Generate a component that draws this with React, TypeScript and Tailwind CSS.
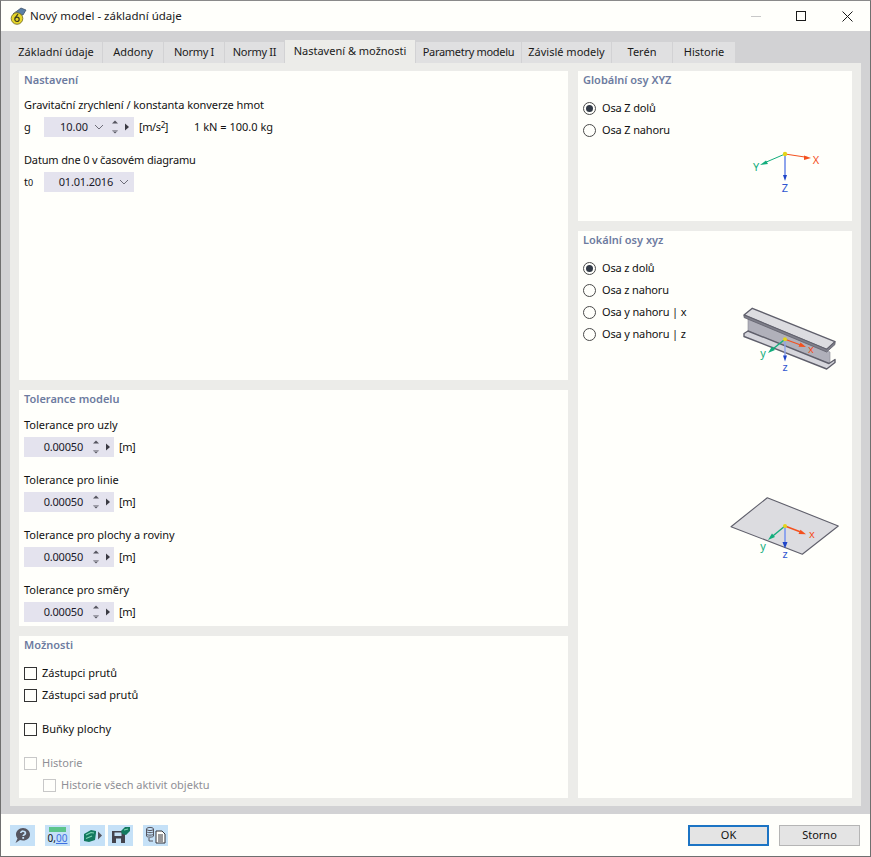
import React from "react";

const FONT = { fontFamily: '"Noto Sans", "Open Sans", sans-serif' };

function Spin() {
  return (
    <svg width="8" height="16" viewBox="0 0 8 16" className="block">
      <path d="M4 1.5 L7 4.5 H1 Z" fill="#55555f" />
      <path d="M4 14.5 L7 11.5 H1 Z" fill="#55555f" />
      <path d="M2 12.5 H6" stroke="#9a9aa5" />
    </svg>
  );
}
function Play() {
  return (
    <svg width="6" height="8" viewBox="0 0 6 8" className="block">
      <path d="M1 0.5 L5 4 L1 7.5 Z" fill="#3a3a42" />
    </svg>
  );
}
function Chevron() {
  return (
    <svg width="10" height="6" viewBox="0 0 10 6" className="block">
      <path d="M1 1 L5 5 L9 1" fill="none" stroke="#6d6d78" strokeWidth="1" />
    </svg>
  );
}

function Tab({ w, label, active, tight }: { w: string; label: string; active?: boolean; tight?: boolean }) {
  return (
    <div
      className={
        (active
          ? "h-[23px] flex items-center justify-center bg-[#ecece9] text-[#1a1a1a] "
          : "h-[21px] flex items-center justify-center bg-[#e0e0e1] text-[#1a1a1a] ") +
        (tight ? "tracking-[-0.3px] " : "") +
        w
      }
    >
      {label}
    </div>
  );
}

function Panel({ title, className, children }: { title: string; className: string; children?: React.ReactNode }) {
  return (
    <section className={"bg-[#fffffb] px-[5px] " + className}>
      <h2 className="h-[18px] leading-[18px] font-semibold text-[#6d7ba0] text-[11px]">{title}</h2>
      {children}
    </section>
  );
}

function Tolerance({ label, first }: { label: string; first?: boolean }) {
  return (
    <div className={first ? "mt-[8px]" : "mt-[14px]"}>
      <div className="h-[18px] leading-[18px]">{label}</div>
      <div className="mt-[3px] flex items-center h-[20px]">
        <div className="w-[90px] h-[20px] bg-[#e4e3ee] flex items-center">
          <span className="w-[59px] text-right text-[#1a1a2a] tracking-[-0.2px]">0.00050</span>
          <span className="ml-[9px]"><Spin /></span>
          <span className="ml-[5px]"><Play /></span>
        </div>
        <span className="ml-[5px] tracking-[-0.4px]">[m]</span>
      </div>
    </div>
  );
}

function Radio({ label, checked }: { label: string; checked?: boolean }) {
  return (
    <div className="h-[22px] flex items-center">
      <span className="w-[13px] h-[13px] rounded-full border border-[#4a4a4a] bg-[#fffffb] flex items-center justify-center">
        {checked && <span className="w-[7px] h-[7px] rounded-full bg-[#333b47]" />}
      </span>
      <span className="ml-[6px] tracking-[-0.15px]">{label}</span>
    </div>
  );
}

function Check({ label, disabled, className }: { label: string; disabled?: boolean; className?: string }) {
  return (
    <div className={"h-[22px] flex items-center " + (className ?? "")}>
      <span className={"w-[13px] h-[13px] border " + (disabled ? "border-[#c8c8c8]" : "border-[#333333]")} />
      <span className={"ml-[5px] " + (disabled ? "text-[#8f8f96]" : "")}>{label}</span>
    </div>
  );
}

function GlobalAxes() {
  return (
    <svg width="127" height="60" viewBox="720 140 127 60" className="block">
      <path d="M785 154 L808 157.5" stroke="#f4511e" strokeWidth="1" />
      <path d="M811 158 L804 155.5 L804 160 Z" fill="#f4511e" />
      <path d="M785 154 L764 163" stroke="#12ad7c" strokeWidth="1" />
      <path d="M760 165 L766 160.5 L768 164 Z" fill="#12ad7c" />
      <path d="M785 154 V175" stroke="#8ea4ec" strokeWidth="2" />
      <path d="M785 181 L783 175 H787 Z" fill="#1f45c8" />
      <circle cx="785" cy="154" r="2.2" fill="#e4d41a" />
      <text x="816" y="164" textAnchor="middle" fontSize="11" fill="#f4511e">X</text>
      <text x="756" y="171" textAnchor="middle" fontSize="11" fill="#12ad7c">Y</text>
      <text x="785" y="192" textAnchor="middle" fontSize="11" fill="#2f55d0">Z</text>
    </svg>
  );
}

function BeamIcon() {
  return (
    <svg width="127" height="90" viewBox="720 290 127 90" className="block">
      <path d="M748 318 L830 352 V364 L748 331 Z" fill="#b0b0ba" stroke="#8a8a95" strokeWidth="0.6" />
      <path d="M744 333.5 L748 331 L829 363.5 L835 359.5 V362.5 L826.7 369 L744 336.5 Z" fill="#d6d6dc" stroke="#5f5f6b" strokeWidth="1.4" strokeLinejoin="round" />
      <path d="M744 315 L752.3 308.3 L835 341.7 L826.7 349.3 Z" fill="#dcdce0" stroke="#5f5f6b" strokeWidth="1.4" strokeLinejoin="round" />
      <path d="M744 315 L826.7 349.3 L835 341.7 V344.5 L826.7 352 L744 317.5 Z" fill="#7f7f8a" stroke="#5f5f6b" strokeWidth="0.8" strokeLinejoin="round" />
      <path d="M785 339.3 L802 345.5" stroke="#f4511e" strokeWidth="1.2" />
      <path d="M806 347 L798.5 346.8 L800.5 342.5 Z" fill="#f4511e" />
      <path d="M785 339.3 L771 350.5" stroke="#12ad7c" strokeWidth="1.4" />
      <path d="M768 353 L772 346.5 L775 350 Z" fill="#12ad7c" />
      <path d="M785 339.3 V356" stroke="#8ea4ec" strokeWidth="1.4" />
      <path d="M785 361.5 L783 355.5 H787 Z" fill="#1f45c8" />
      <circle cx="785" cy="339.3" r="2" fill="#e4d41a" />
      <text x="811" y="353" textAnchor="middle" fontSize="11" fill="#f4511e">x</text>
      <text x="763" y="357" textAnchor="middle" fontSize="11" fill="#12ad7c">y</text>
      <text x="785" y="371" textAnchor="middle" fontSize="11" fill="#2f55d0">z</text>
    </svg>
  );
}

function PlateIcon() {
  return (
    <svg width="127" height="80" viewBox="720 485 127 80" className="block">
      <path d="M767.3 497.7 L838.3 526 L802.3 554.3 L731 526.7 Z" fill="#dcdce0" stroke="#5f5f6b" strokeWidth="1.1" strokeLinejoin="round" />
      <path d="M785 526 L802 532.5" stroke="#f4511e" strokeWidth="1.4" />
      <path d="M806 534.3 L798.5 534 L800.5 529.8 Z" fill="#f4511e" />
      <path d="M785 526 L771 537.5" stroke="#12ad7c" strokeWidth="1.4" />
      <path d="M768 540 L772 533.5 L775 537 Z" fill="#12ad7c" />
      <path d="M785 526 V543" stroke="#8ea4ec" strokeWidth="2" />
      <path d="M785 548.5 L782.5 542 H787.5 Z" fill="#1f45c8" />
      <circle cx="785" cy="526" r="2" fill="#e4d41a" />
      <text x="812" y="538" textAnchor="middle" fontSize="11" fill="#f4511e">x</text>
      <text x="763" y="550" textAnchor="middle" fontSize="11" fill="#12ad7c">y</text>
      <text x="785" y="558" textAnchor="middle" fontSize="11" fill="#2f55d0">z</text>
    </svg>
  );
}

function AppIcon() {
  return (
    <svg width="18" height="18" viewBox="0 0 18 18" className="block">
      <path d="M4 7 L12 1 L17 3 L14 8 Z" fill="#5b7fa6" stroke="#33465e" strokeWidth="0.7" />
      <path d="M3 9 L7 4 L8 8 Z" fill="#9a9a82" />
      <circle cx="8" cy="11.5" r="5.8" fill="#e7d62b" stroke="#6b6320" strokeWidth="0.8" />
      <circle cx="8" cy="12.3" r="2.2" fill="none" stroke="#3b3b20" strokeWidth="1.2" />
      <path d="M6 11 L9 7.2" stroke="#3b3b20" strokeWidth="1.2" />
    </svg>
  );
}

function FootBtn({ children, className }: { children: React.ReactNode; className: string }) {
  return <div className={"w-[25px] h-[21px] bg-[#c5e1f7] flex items-center justify-center " + className}>{children}</div>;
}

export default function App() {
  return (
    <div
      style={FONT}
      className="w-[871px] h-[857px] flex flex-col bg-[#d2d2d4] border border-[#6f6f6f] border-t-[#8a8a8a] text-[11px] text-[#111111] overflow-hidden"
    >
      <header className="h-[30px] bg-[#fffffb] flex items-center pl-[8px] shrink-0">
        <AppIcon />
        <span className="ml-[3px] text-[11.5px] text-[#1a1a1a]">Nový model - základní údaje</span>
        <div className="ml-auto flex items-center">
          <span className="w-[10px] h-px bg-[#c8c8c8] mr-[35px]" />
          <span className="w-[10px] h-[10px] border border-[#1a1a1a] mr-[36px]" />
          <svg width="11" height="11" viewBox="0 0 11 11" className="block mr-[17px]">
            <path d="M0.5 0.5 L10.5 10.5 M10.5 0.5 L0.5 10.5" stroke="#1a1a1a" strokeWidth="1" />
          </svg>
        </div>
      </header>

      <div className="flex-1 flex flex-col pl-[9px] pr-[9px] pt-[9px] pb-[8px] min-h-0">
        <nav className="flex items-end h-[23px] gap-px shrink-0">
          <Tab w="w-[92px]" label="Základní údaje" />
          <Tab w="w-[60px]" label="Addony" />
          <Tab w="w-[60px]" label="Normy I" tight />
          <Tab w="w-[59px]" label="Normy II" tight />
          <Tab w="w-[130px]" label="Nastavení & možnosti" active />
          <Tab w="w-[105px]" label="Parametry modelu" tight />
          <Tab w="w-[89px]" label="Závislé modely" />
          <Tab w="w-[60px]" label="Terén" />
          <Tab w="w-[62px]" label="Historie" />
        </nav>
        <main className="flex-1 bg-[#ecece9] p-[9px] pt-[8px] pb-[8px] flex gap-[10px] min-h-0">
          <div className="w-[549px] flex flex-col gap-[10px]">
            <Panel title="Nastavení" className="h-[309px]">
              <div className="mt-[7px] h-[18px] leading-[18px] tracking-[-0.065px]">Gravitační zrychlení / konstanta konverze hmot</div>
              <div className="mt-[3px] flex items-center h-[20px]">
                <span className="w-[20px]">g</span>
                <div className="w-[90px] h-[20px] bg-[#e4e3ee] flex items-center">
                  <span className="w-[44px] text-right text-[#1a1a2a]">10.00</span>
                  <span className="ml-[6px]"><Chevron /></span>
                  <span className="ml-[7px]"><Spin /></span>
                  <span className="ml-[5px]"><Play /></span>
                </div>
                <span className="ml-[5px] tracking-[-0.4px]">[m/s<span className="text-[8px] relative top-[-3px]">2</span>]</span>
                <span className="ml-[26px]">1 kN = 100.0 kg</span>
              </div>
              <div className="mt-[14px] h-[18px] leading-[18px] tracking-[-0.16px]">Datum dne 0 v časovém diagramu</div>
              <div className="mt-[3px] flex items-center h-[20px]">
                <span className="w-[20px]">t<span className="text-[9px]">0</span></span>
                <div className="w-[90px] h-[20px] bg-[#e4e3ee] flex items-center">
                  <span className="w-[69px] text-right text-[#1a1a2a] tracking-[-0.2px]">01.01.2016</span>
                  <span className="ml-[6px]"><Chevron /></span>
                </div>
              </div>
            </Panel>
            <Panel title="Tolerance modelu" className="h-[236px]">
              <Tolerance first label="Tolerance pro uzly" />
              <Tolerance label="Tolerance pro linie" />
              <Tolerance label="Tolerance pro plochy a roviny" />
              <Tolerance label="Tolerance pro směry" />
            </Panel>
            <Panel title="Možnosti" className="flex-1">
              <div className="mt-[8px]">
                <Check label="Zástupci prutů" />
                <Check label="Zástupci sad prutů" />
                <Check className="mt-[12px]" label="Buňky plochy" />
                <Check className="mt-[12px]" disabled label="Historie" />
                <Check className="ml-[19px]" disabled label="Historie všech aktivit objektu" />
              </div>
            </Panel>
          </div>
          <div className="w-[274px] flex flex-col gap-[10px]">
            <Panel title="Globální osy XYZ" className="h-[150px]">
              <div className="flex">
                <div className="mt-[8px] w-[137px]">
                  <Radio checked label="Osa Z dolů" />
                  <Radio label="Osa Z nahoru" />
                </div>
                <div className="mt-[51px]">
                  <GlobalAxes />
                </div>
              </div>
            </Panel>
            <Panel title="Lokální osy xyz" className="flex-1">
              <div className="flex">
                <div className="mt-[8px] w-[137px]">
                  <Radio checked label="Osa z dolů" />
                  <Radio label="Osa z nahoru" />
                  <Radio label="Osa y nahoru | x" />
                  <Radio label="Osa y nahoru | z" />
                </div>
                <div className="mt-[41px] flex flex-col">
                  <BeamIcon />
                  <div className="mt-[105px]"><PlateIcon /></div>
                </div>
              </div>
            </Panel>
          </div>
        </main>
      </div>

      <footer className="h-[42px] bg-[#fffffb] shrink-0 flex items-center pl-[9px] pr-[10px]">
        <FootBtn className="">
          <svg width="17" height="17" viewBox="0 0 17 17">
            <path d="M9 1 C13 1 16 4 16 7.5 C16 11 13 13.5 9 13.5 C8 13.5 7 13.3 6 13 L1.5 16 L3.5 11.5 C2.5 10.2 2 9 2 7.5 C2 4 5 1 9 1 Z" fill="#55555f" />
            <path d="M6.8 6 C6.8 3.6 11.4 3.6 11.4 6.2 C11.4 7.8 9.2 7.6 9.2 9" fill="none" stroke="#c5e1f7" strokeWidth="1.7" />
            <rect x="8.3" y="10" width="1.8" height="1.8" fill="#c5e1f7" />
          </svg>
        </FootBtn>
        <FootBtn className="ml-[10px]">
          <div className="w-[21px] flex flex-col items-center">
            <div className="w-[17px] h-[5px] bg-[#5cc48a]" />
            <div className="flex leading-[12px] text-[10px]">
              <span className="text-[#111111]">0,</span>
              <span className="text-[#3c6fe0] underline">00</span>
            </div>
          </div>
        </FootBtn>
        <FootBtn className="ml-[10px]">
          <svg width="20" height="15" viewBox="0 0 20 15">
            <path d="M1 6 L8 2 L13 3 L13 5 L12 12 L6 14 L1 13 Z" fill="#137a5f" />
            <path d="M3 7 L8 4.5 L11 5 M3 10.5 L9 8" stroke="#7fd6b4" strokeWidth="1.2" fill="none" />
            <path d="M15 3.5 L19 7.5 L15 11.5 Z" fill="#55555f" />
          </svg>
        </FootBtn>
        <FootBtn className="ml-[3px]">
          <svg width="20" height="18" viewBox="0 0 20 18">
            <path d="M1 5 H12 L14 7 V17 H1 Z" fill="#44444e" />
            <rect x="3.5" y="6.5" width="7" height="3.5" fill="#c5e1f7" />
            <rect x="5" y="12.5" width="5" height="4.5" fill="#c5e1f7" />
            <path d="M10 5 L14 1 L19 1 L19 5 L15 9 L11 8 Z" fill="#137a5f" />
            <path d="M13 4 L17 3" stroke="#7fd6b4" strokeWidth="1.2" />
          </svg>
        </FootBtn>
        <FootBtn className="ml-[10px]">
          <svg width="21" height="18" viewBox="0 0 21 18">
            <ellipse cx="5" cy="3" rx="3.5" ry="1.6" fill="none" stroke="#55555f" />
            <path d="M1.5 3 V10 C1.5 11.5 8.5 11.5 8.5 10 V3 M1.5 5.5 C1.5 7 8.5 7 8.5 5.5 M1.5 8 C1.5 9.5 8.5 9.5 8.5 8" fill="none" stroke="#55555f" />
            <path d="M4 12 V15 H8" fill="none" stroke="#55555f" />
            <path d="M11 5 H17 L20 8 V17 H11 Z" fill="#fffffb" stroke="#33333a" />
            <path d="M13 9 H18 M13 11 H18 M13 13 H18 M13 15 H18" stroke="#33333a" />
          </svg>
        </FootBtn>
        <button className="ml-auto w-[81px] h-[21px] border-2 border-[#1c74c4] bg-[#e4e4e4] text-[#111111] flex items-center justify-center">OK</button>
        <button className="ml-[10px] w-[81px] h-[21px] border border-[#b5b5b5] bg-[#e4e4e4] text-[#111111] flex items-center justify-center">Storno</button>
      </footer>
    </div>
  );
}
